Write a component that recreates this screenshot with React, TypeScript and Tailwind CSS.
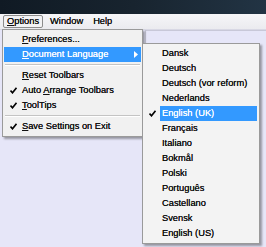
import React from "react";

const Check = () => (
  <svg width="7" height="7" viewBox="0 0 7 7" className="block">
    <path d="M0.5 3.5 L2.5 5.8 L6.5 0.8" stroke="#000" strokeWidth="1.6" fill="none" />
  </svg>
);

type Item = { label: React.ReactNode; checked?: boolean; active?: boolean; sub?: boolean };

const U = ({ c }: { c: string }) => <span className="underline underline-offset-1">{c}</span>;

export default function App() {
  const main: (Item | "sep")[] = [
    { label: <><U c="P" />references...</> },
    { label: <><U c="D" />ocument Language</>, active: true, sub: true },
    "sep",
    { label: <><U c="R" />eset Toolbars</> },
    { label: <>Auto <U c="A" />rrange Toolbars</>, checked: true },
    { label: <><U c="T" />oolTips</>, checked: true },
    "sep",
    { label: <><U c="S" />ave Settings on Exit</>, checked: true },
  ];
  const langs = [
    "Dansk",
    "Deutsch",
    "Deutsch (vor reform)",
    "Nederlands",
    "English (UK)",
    "Français",
    "Italiano",
    "Bokmål",
    "Polski",
    "Português",
    "Castellano",
    "Svensk",
    "English (US)",
  ];
  return (
    <div
      className="relative w-[266px] h-[247px] overflow-hidden bg-[#e6e6f8] text-[9.3px] text-[#111] [text-shadow:0_0_0.35px_currentColor]"
      style={{ fontFamily: '"Liberation Sans", Arial, sans-serif' }}
    >
      <div className="h-[14px] bg-gradient-to-r from-[#101a24] via-[#18242f] to-[#223444]" />
      <div className="h-[16px] bg-gradient-to-b from-[#f6f6f8] to-[#ebebef] border-b border-[#d8d8e4] flex items-center pl-[3px] gap-0">
        <div className="h-[13px] px-[3px] flex items-center border border-[#8c8c8c] rounded-[2px] bg-[#f2f2f4]">
          <U c="O" />ptions
        </div>
        <div className="px-[6px] ml-[1px]">Window</div>
        <div className="px-[4px]">Help</div>
      </div>
      <div className="absolute left-[145px] top-[30px] w-[130px] h-[20px] border-l border-t border-[#c8c8d8]" />

      {/* main menu */}
      <div className="absolute left-[2px] top-[29px] w-[141px] bg-[#f1f1f1] border border-[#9a9a9a] py-[2px] shadow-[2px_2px_2px_rgba(0,0,0,0.35)]">
        {main.map((it, i) =>
          it === "sep" ? (
            <div key={i} className="h-[6px] flex flex-col justify-center px-[2px]">
              <div className="h-px bg-[#c4c4c4]" />
              <div className="h-px bg-white" />
            </div>
          ) : (
            <div
              key={i}
              className={`relative h-[15px] mx-[1px] flex items-center ${
                it.active ? "bg-[#3399ff] text-white" : ""
              }`}
            >
              <div className="w-[18px] flex justify-center pl-[1px]">{it.checked && <Check />}</div>
              <div className="whitespace-nowrap">{it.label}</div>
              {it.sub && (
                <svg width="4" height="7" viewBox="0 0 4 7" className="absolute right-[3px] top-[4px]">
                  <path d="M0 0 L4 3.5 L0 7 Z" fill="#fff" />
                </svg>
              )}
            </div>
          )
        )}
      </div>

      {/* submenu */}
      <div className="absolute left-[142px] top-[43px] w-[118px] bg-[#f3f3f3] border border-[#9a9a9a] py-[2px] shadow-[2px_2px_2px_rgba(0,0,0,0.35)]">
        {langs.map((l, i) => {
          const active = l === "English (UK)";
          return (
            <div key={l} className="h-[15px] flex items-center">
              <div className="w-[17px] flex justify-center pl-[2px]">{active && <Check />}</div>
              <div
                className={`flex-1 h-full flex items-center pl-[2px] mr-[2px] whitespace-nowrap ${
                  active ? "bg-[#3399ff] text-white" : ""
                }`}
              >
                {l}
              </div>
            </div>
          );
        })}
      </div>
    </div>
  );
}
